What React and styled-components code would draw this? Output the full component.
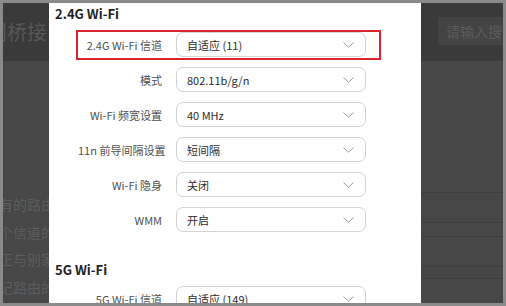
import React from 'react';
import styled, { createGlobalStyle } from 'styled-components';

// Global

const GlobalStyle = createGlobalStyle`
  html, body {
    margin: 0;
    padding: 0;
    background: #8a8a8a;
  }
  * {
    box-sizing: border-box;
  }
`;

const FONT = `"Noto Sans CJK SC", "Noto Sans", sans-serif`;

// Frame and page behind the dialog

const Frame = styled.div`
  position: relative;
  width: 506px;
  height: 306px;
  border: 3px solid #8a8a8a;
  overflow: hidden;
  font-family: ${FONT};
`;

const Page = styled.div`
  display: flex;
  flex-direction: column;
  height: 100%;
  background: #474747;
`;

const Header = styled.div`
  display: flex;
  justify-content: space-between;
  align-items: center;
  height: 58px;
  padding-bottom: 2px;
  background: #3a3a3a;
`;

const PageTitle = styled.div`
  margin-left: -16px;
  font-size: 20px;
  color: #575757;
  white-space: nowrap;
`;

const Search = styled.div`
  width: 80px;
  height: 28px;
  margin-right: -15px;
  padding-left: 8px;
  display: flex;
  align-items: center;
  background: #444444;
  font-size: 14px;
  color: #5c5c5c;
  white-space: nowrap;
  overflow: hidden;
`;

const Body = styled.div`
  flex: 1;
  display: flex;
  justify-content: space-between;
`;

const TextCol = styled.div`
  margin-left: -4px;
  padding-top: 130px;
  font-size: 14px;
  line-height: 27.7px;
  color: #5d5d5d;
  white-space: nowrap;
`;

const TableCol = styled.div`
  width: 82px;
  display: flex;
  flex-direction: column;
`;

const TableRow = styled.div`
  height: ${(p) => p.$h}px;
  border-bottom: 1px solid #3e3e3e;
`;

// Dialog

const Dialog = styled.div`
  position: absolute;
  left: 46px;
  top: 0;
  bottom: 0;
  width: 372px;
  padding: 2px 0 0 6px;
  background: #ffffff;
`;

const SectionTitle = styled.div`
  margin: ${(p) => (p.$first ? '0' : '26px')} 0 ${(p) => (p.$first ? '7px' : '5px')};
  font-size: 13px;
  font-weight: 700;
  line-height: 18px;
  color: #222222;
`;

const Rows = styled.div`
  display: flex;
  flex-direction: column;
  gap: 5px;
  margin-left: 21px;
`;

const Row = styled.div`
  display: flex;
  align-items: center;
  gap: 14px;
  width: 305px;
  padding: 0 13px 1px 0;
  border: 2px solid ${(p) => (p.$highlight ? '#d8262c' : 'transparent')};
`;

const Label = styled.div`
  width: 84px;
  text-align: right;
  font-size: 11px;
  color: #505050;
  white-space: nowrap;
`;

const Select = styled.div`
  width: 190px;
  height: 25px;
  display: flex;
  justify-content: space-between;
  align-items: center;
  padding: 0 11px 0 10px;
  border: 1px solid #d2d2d2;
  border-radius: 7px;
  font-size: 11px;
  color: #2c2c2c;
  white-space: nowrap;
`;

const Chevron = () => (
  <svg width="11" height="6" viewBox="0 0 11 6" fill="none">
    <path d="M0.5 0.5 L5.5 5.2 L10.5 0.5" stroke="#9a9a9a" strokeWidth="1" />
  </svg>
);

const band24 = [
  { label: '2.4G Wi-Fi 信道', value: '自适应 (11)', highlight: true },
  { label: '模式', value: '802.11b/g/n' },
  { label: 'Wi-Fi 频宽设置', value: '40 MHz' },
  { label: '11n 前导间隔设置', value: '短间隔' },
  { label: 'Wi-Fi 隐身', value: '关闭' },
  { label: 'WMM', value: '开启' },
];

const band5 = [{ label: '5G Wi-Fi 信道', value: '自适应 (149)' }];

const SettingRows = ({ items }) => (
  <Rows>
    {items.map((it) => (
      <Row key={it.label} $highlight={it.highlight}>
        <Label>{it.label}</Label>
        <Select>
          <span>{it.value}</span>
          <Chevron />
        </Select>
      </Row>
    ))}
  </Rows>
);

export default function App() {
  return (
    <>
      <GlobalStyle />
      <Frame>
        <Page>
          <Header>
            <PageTitle>网桥接入</PageTitle>
            <Search>请输入搜索</Search>
          </Header>
          <Body>
            <TextCol>
              <div>有的路由器</div>
              <div>个信道的</div>
              <div>正与别家</div>
              <div>记路由的</div>
            </TextCol>
            <TableCol>
              <TableRow $h={132} />
              <TableRow $h={30} />
              <TableRow $h={14} />
              <TableRow $h={30} />
              <TableRow $h={12} />
            </TableCol>
          </Body>
        </Page>
        <Dialog>
          <SectionTitle $first>2.4G Wi-Fi</SectionTitle>
          <SettingRows items={band24} />
          <SectionTitle>5G Wi-Fi</SectionTitle>
          <SettingRows items={band5} />
        </Dialog>
      </Frame>
    </>
  );
}
